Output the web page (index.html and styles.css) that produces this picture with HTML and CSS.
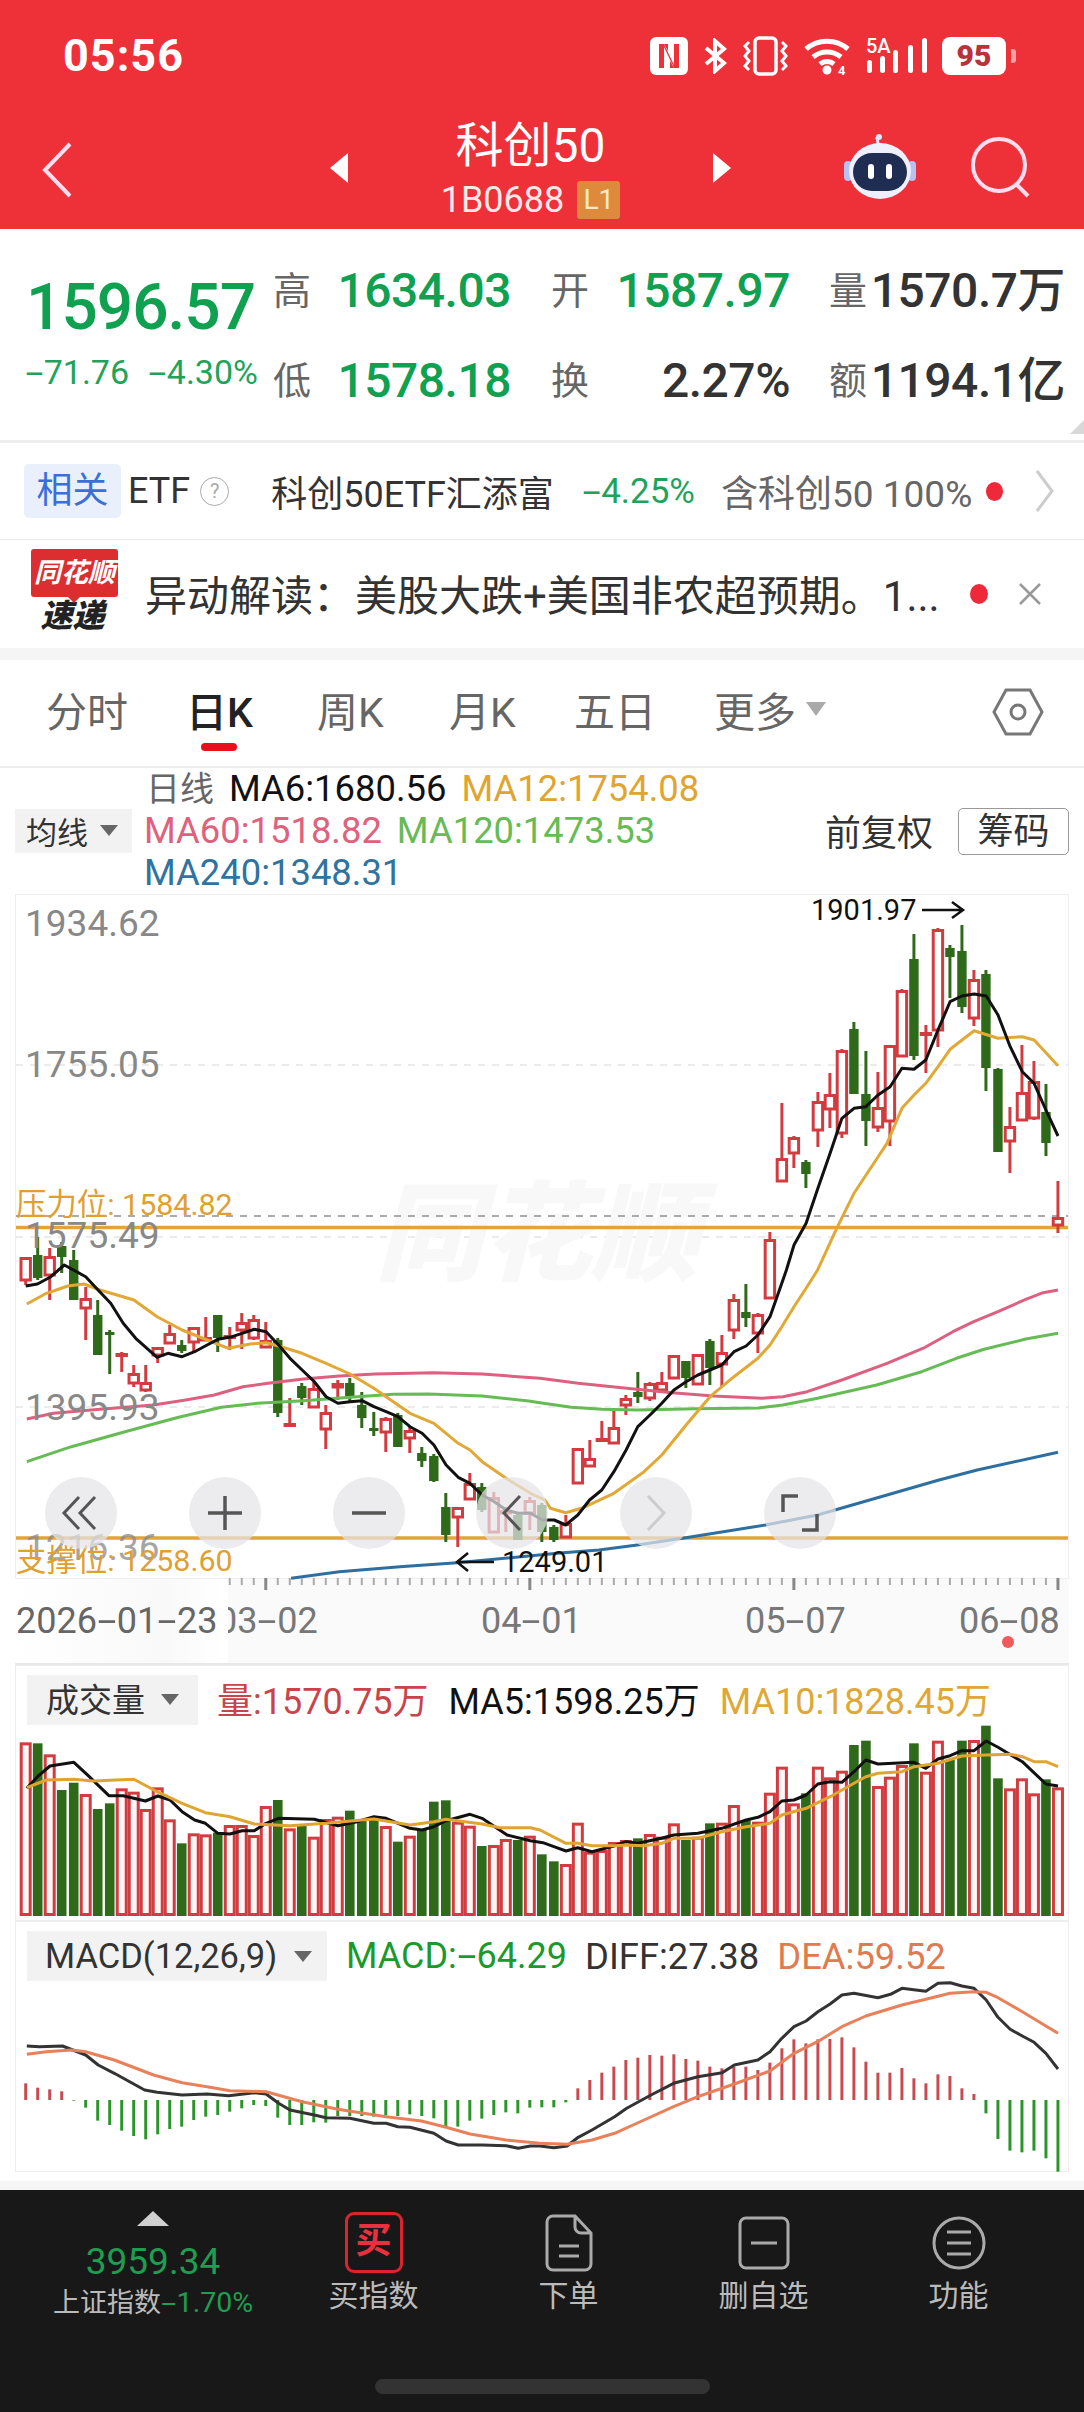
FILE: index.html
```html
<!DOCTYPE html>
<html lang="zh-CN">
<head>
<meta charset="utf-8">
<title>科创50</title>
<link rel="stylesheet" href="styles.css">
</head>
<body>
<div class="app">
  <header class="top">
    <div class="status">
      <span class="time">05:56</span>
      <div class="status-icons">
        <svg class="ic-nfc" width="38" height="38" viewBox="0 0 38 38"><rect width="38" height="38" rx="6" fill="#fff"/><path d="M9 31V7h5l10 21V7h5v24h-5L14 10v21z" fill="#ee3039"/><path d="M14 7h4v7zM24 31h-4v-7z" fill="#ee3039"/></svg>
        <svg class="ic-bt" width="24" height="36" viewBox="0 0 24 36"><path d="M3 10l18 15-9 8V3l9 8L3 26" fill="none" stroke="#fff" stroke-width="4"/></svg>
        <svg class="ic-vib" width="45" height="40" viewBox="0 0 45 40"><rect x="12" y="2" width="21" height="36" rx="4" fill="none" stroke="#fff" stroke-width="3.5"/><path d="M6 6l-4 4 4 5-4 5 4 5-4 5 4 4M39 6l4 4-4 5 4 5-4 5 4 5-4 4" fill="none" stroke="#fff" stroke-width="3"/></svg>
        <svg class="ic-wifi" width="51" height="40" viewBox="0 0 51 40"><g fill="none" stroke="#fff" stroke-width="5"><path d="M3 13a32 32 0 0 1 42 0"/><path d="M10 21a22 22 0 0 1 28 0"/><path d="M17 28a11 11 0 0 1 14 0"/></g><circle cx="24" cy="34" r="4.5" fill="#fff"/><text x="35" y="39" class="ic-wifi-4">4</text></svg>
        <svg class="ic-signal" width="62" height="40" viewBox="0 0 62 40"><text x="0" y="17" class="ic-5a">5A</text><g fill="#fff"><rect x="1" y="24" width="5" height="13" rx="2.5"/><rect x="14" y="20" width="5" height="17" rx="2.5"/><rect x="27" y="14" width="5" height="23" rx="2.5"/><rect x="42" y="9" width="5" height="28" rx="2.5"/><rect x="56" y="2" width="5" height="35" rx="2.5"/></g></svg>
        <span class="battery">95</span>
        <span class="battery-nub"></span>
      </div>
    </div>
    <div class="titlebar">
      <svg class="ic-back" width="30" height="56" viewBox="0 0 30 56"><path d="M28 2L3 28l25 26" fill="none" stroke="#fde" stroke-width="4"/></svg>
      <span class="tri tri-left"></span>
      <div class="title">
        <div class="title-name">科创50</div>
        <div class="title-code">1B0688<span class="level">L1</span></div>
      </div>
      <span class="tri tri-right"></span>
      <svg class="ic-robot" width="74" height="66" viewBox="0 0 74 66">
        <path d="M35 12c0-4 0-6-2-8" fill="none" stroke="#dfe3fb" stroke-width="3"/>
        <circle cx="36" cy="4" r="3" fill="#dfe3fb"/>
        <rect x="1" y="28" width="8" height="20" rx="4" fill="#b9c1f2"/>
        <rect x="65" y="28" width="8" height="20" rx="4" fill="#b9c1f2"/>
        <ellipse cx="37" cy="38" rx="31" ry="28" fill="#eef0ff"/>
        <rect x="10" y="20" width="54" height="38" rx="19" fill="#1f2d52"/>
        <rect x="25" y="31" width="6" height="15" rx="3" fill="#fff"/>
        <rect x="43" y="31" width="6" height="15" rx="3" fill="#fff"/>
      </svg>
      <svg class="ic-search" width="62" height="62" viewBox="0 0 62 62"><circle cx="29" cy="29" r="26" fill="none" stroke="#fde" stroke-width="4"/><path d="M46 48l12 12" stroke="#fde" stroke-width="4"/></svg>
    </div>
  </header>

  <section class="quote">
    <div class="q-main">
      <div class="q-price">1596.57</div>
      <div class="q-change"><span><span class="dash">-</span>71.76</span><span><span class="dash">-</span>4.30%</span></div>
    </div>
    <div class="q-stats">
      <span class="q-lbl">高</span><span class="q-val down">1634.03</span>
      <span class="q-lbl">开</span><span class="q-val down">1587.97</span>
      <span class="q-lbl">量</span><span class="q-val">1570.7万</span>
      <span class="q-lbl">低</span><span class="q-val down">1578.18</span>
      <span class="q-lbl">换</span><span class="q-val">2.27%</span>
      <span class="q-lbl">额</span><span class="q-val">1194.1亿</span>
    </div>
    <span class="corner"></span>
  </section>
  <div class="rule-thick"></div>

  <section class="etf">
    <span class="etf-tag">相关</span>
    <span class="etf-word">ETF</span>
    <span class="etf-help">?</span>
    <span class="etf-name">科创50ETF汇添富</span>
    <span class="etf-pct"><span class="dash">-</span>4.25%</span>
    <span class="etf-has">含科创50 100%</span>
    <span class="dot etf-dot"></span>
    <svg class="etf-more" width="20" height="44" viewBox="0 0 20 44"><path d="M2 2l15 20L2 42" fill="none" stroke="#ccc" stroke-width="3"/></svg>
  </section>

  <section class="news">
    <div class="news-logo">
      <span class="news-logo-top">同花顺</span>
      <span class="news-logo-bottom">速递</span>
    </div>
    <div class="news-text">异动解读：美股大跌+美国非农超预期。1...</div>
    <span class="dot news-dot"></span>
    <svg class="news-close" width="24" height="24" viewBox="0 0 24 24"><path d="M2 2l20 20M22 2L2 22" stroke="#999" stroke-width="2.5"/></svg>
  </section>
  <div class="band-a"></div>

  <nav class="tabs">
    <span class="tab">分时</span>
    <span class="tab tab-active">日K</span>
    <span class="tab">周K</span>
    <span class="tab">月K</span>
    <span class="tab">五日</span>
    <span class="tab tab-more">更多<i class="caret"></i></span>
    <svg class="ic-hex" width="52" height="48" viewBox="0 0 52 48"><path d="M2 24L14 2h24l12 22-12 22H14z" fill="none" stroke="#777" stroke-width="3"/><circle cx="26" cy="24" r="7" fill="none" stroke="#777" stroke-width="3"/></svg>
  </nav>

  <section class="legend">
    <div class="pill pill-ma">均线<i class="caret-dark"></i></div>
    <div class="legend-lines">
      <div class="legend-line"><span class="lg-day">日线</span><span class="c-ma6">MA6:1680.56</span><span class="c-ma12">MA12:1754.08</span></div>
      <div class="legend-line"><span class="c-ma60">MA60:1518.82</span><span class="c-ma120">MA120:1473.53</span></div>
      <div class="legend-line"><span class="c-ma240">MA240:1348.31</span></div>
    </div>
    <div class="legend-right">
      <span class="adj">前复权</span>
      <span class="chips">筹码</span>
    </div>
  </section>

  <section class="price">
    <svg id="price-svg" class="price-svg" width="1084" height="685" viewBox="0 894 1084 685">
      <rect x="15.5" y="894.5" width="1053" height="684" fill="none" stroke="#eee"/>
      <g class="grid"><path d="M16 1065H1068M16 1237H1068M16 1407H1068"/></g>
      <text x="375" y="1272" class="watermark">同花顺</text>
      <path class="level-dash" d="M16 1216H1068"/>
      <path class="level-line" d="M16 1227.5H1068M16 1538H1068"/>
      <g id="price-layer"></g>
      <path class="arrow" d="M922 910h40m-10-8l11 8-11 8"/>
      <path class="arrow" d="M494 1562h-36m10-9l-11 9 11 9"/>
    </svg>
    <span class="axis ax-1">1934.62</span>
    <span class="axis ax-2">1755.05</span>
    <span class="axis ax-3">1575.49</span>
    <span class="axis ax-4">1395.93</span>
    <span class="axis ax-5">1216.36</span>
    <span class="lvl lvl-up">压力位: 1584.82</span>
    <span class="lvl lvl-down">支撑位: 1258.60</span>
    <span class="ext ext-hi">1901.97</span>
    <span class="ext ext-lo">1249.01</span>
    <div class="zoomers">
      <span class="zoomer"><svg width="40" height="40" viewBox="0 0 40 40"><path d="M18 4L3 20l15 16M34 4L19 20l15 16" fill="none" stroke="#555" stroke-width="3"/></svg></span>
      <span class="zoomer"><svg width="36" height="36" viewBox="0 0 36 36"><path d="M1 18h34M18 1v34" stroke="#555" stroke-width="3.5"/></svg></span>
      <span class="zoomer"><svg width="36" height="36" viewBox="0 0 36 36"><path d="M1 18h34" stroke="#555" stroke-width="3.5"/></svg></span>
      <span class="zoomer"><svg width="22" height="40" viewBox="0 0 22 40"><path d="M19 3L3 20l16 17" fill="none" stroke="#555" stroke-width="3"/></svg></span>
      <span class="zoomer"><svg width="22" height="40" viewBox="0 0 22 40"><path d="M3 3l16 17L3 37" fill="none" stroke="#ccc" stroke-width="3"/></svg></span>
      <span class="zoomer"><svg width="38" height="38" viewBox="0 0 38 38"><path d="M2 18V2h15M36 20v16H21" fill="none" stroke="#555" stroke-width="3.5"/></svg></span>
    </div>
    <div class="dates">
      <span class="date d-2">03<span class="dash">-</span>02</span>
      <span class="date d-1">2026<span class="dash">-</span>01<span class="dash">-</span>23</span>
      <span class="date d-3">04<span class="dash">-</span>01</span>
      <span class="date d-4">05<span class="dash">-</span>07</span>
      <span class="date d-5">06<span class="dash">-</span>08</span>
      <span class="dot date-dot"></span>
    </div>
  </section>

  <section class="pane pane-vol">
    <div class="pane-head">
      <div class="pill pill-vol">成交量<i class="caret-dark"></i></div>
      <span class="v-vol">量:1570.75万</span>
      <span class="v-ma5">MA5:1598.25万</span>
      <span class="v-ma10">MA10:1828.45万</span>
    </div>
    <svg id="vol-svg" class="pane-svg" width="1054" height="196" viewBox="15 1725 1054 196"></svg>
  </section>

  <section class="pane pane-macd">
    <div class="pane-head">
      <div class="pill pill-macd">MACD(12,26,9)<i class="caret-dark"></i></div>
      <span class="m-macd">MACD:<span class="dash">-</span>64.29</span>
      <span class="m-diff">DIFF:27.38</span>
      <span class="m-dea">DEA:59.52</span>
    </div>
    <svg id="macd-svg" class="pane-svg" width="1054" height="191" viewBox="15 1981 1054 191"></svg>
  </section>
  <div class="spacer-white"></div>
  <div class="band-b"></div>

  <footer class="nav">
    <div class="nav-index">
      <span class="nav-up"></span>
      <span class="nav-num">3959.34</span>
      <span class="nav-sub">上证指数<b><span class="dash">-</span>1.70%</b></span>
    </div>
    <div class="nav-item">
      <span class="nav-ico"><span class="buy">买</span></span>
      <span class="nav-label">买指数</span>
    </div>
    <div class="nav-item">
      <span class="nav-ico"><svg width="48" height="58" viewBox="0 0 48 58"><path d="M8 2h22l16 17v31a6 6 0 0 1-6 6H8a6 6 0 0 1-6-6V8a6 6 0 0 1 6-6zM30 2v11a6 6 0 0 0 6 6h10" fill="none" stroke="#aaa" stroke-width="3"/><path d="M14 32h20M14 42h20" stroke="#aaa" stroke-width="3"/></svg></span>
      <span class="nav-label">下单</span>
    </div>
    <div class="nav-item">
      <span class="nav-ico"><svg width="52" height="54" viewBox="0 0 52 54"><rect x="2" y="2" width="48" height="50" rx="6" fill="none" stroke="#aaa" stroke-width="3"/><path d="M13 27h26" stroke="#aaa" stroke-width="3"/></svg></span>
      <span class="nav-label">删自选</span>
    </div>
    <div class="nav-item">
      <span class="nav-ico"><svg width="54" height="54" viewBox="0 0 54 54"><circle cx="27" cy="27" r="25" fill="none" stroke="#aaa" stroke-width="3"/><path d="M15 16h24M15 27h24M15 38h24" stroke="#aaa" stroke-width="3"/></svg></span>
      <span class="nav-label">功能</span>
    </div>
    <span class="home-bar"></span>
  </footer>
</div>
<script src="chart.js"></script>
</body>
</html>
```
FILE: styles.css
```css
* { box-sizing: border-box; }
html, body { margin: 0; padding: 0; background: #fff; }
body { font-family: Roboto, "Noto Sans CJK SC", sans-serif; color: #333; }
.app { width: 1084px; height: 2412px; overflow: hidden; display: flex; flex-direction: column; }
i { font-style: normal; }
.dash { display: inline-block; width: .55em; text-align: center; transform: scaleX(1.9); }

/* header */
.top { height: 229px; background: #ee3039; color: #fff; padding-top: 36px; flex: none; }
.status { display: flex; align-items: center; height: 40px; padding-left: 63px; padding-right: 68px; }
.time { font-size: 45px; font-weight: 700; letter-spacing: 1px; line-height: 40px; }
.status-icons { margin-left: auto; display: flex; align-items: center; }
.ic-bt { margin-left: 15px; }
.ic-vib { margin-left: 16px; }
.ic-wifi { margin-left: 15px; }
.ic-signal { margin-left: 12px; }
.ic-wifi-4 { font-size: 13px; font-weight: 700; fill: #fff; }
.ic-5a { font-size: 20px; font-weight: 500; fill: #fff; }
.battery { margin-left: 14px; width: 64px; height: 38px; border-radius: 8px; background: #fff; color: #b8323b; font-size: 30px; font-weight: 900; line-height: 38px; text-align: center; }
.battery-nub { margin-left: 5px; width: 5px; height: 14px; border-radius: 0 3px 3px 0; background: rgba(255,255,255,.55); }
.titlebar { display: flex; align-items: center; height: 106px; margin-top: 37px; padding-left: 42px; }
.ic-back { flex: none; margin-top: 8px; }
.tri { flex: none; width: 0; height: 0; border-top: 15px solid transparent; border-bottom: 15px solid transparent; margin-top: 3px; }
.tri-left { margin-left: 258px; border-right: 18px solid #fff; }
.tri-right { border-left: 18px solid #fff; }
.title { width: 365px; text-align: center; flex: none; margin-top: 6px; }
.title-name { font-size: 48px; line-height: 56px; white-space: nowrap; }
.title-code { font-size: 36px; line-height: 40px; margin-top: 6px; color: #fde8e8; display: flex; justify-content: center; align-items: center; }
.level { margin-left: 13px; width: 43px; height: 38px; background: #dd8a3d; color: #fde8c8; border-radius: 3px; font-size: 28px; line-height: 38px; }
.ic-robot { flex: none; margin-left: 112px; }
.ic-search { flex: none; margin-left: 53px; margin-top: 2px; }

/* quote */
.quote { height: 211px; flex: none; display: flex; position: relative; }
.q-main { width: 273px; padding: 48px 0 0 25px; flex: none; }
.q-price { font-size: 64px; font-weight: 500; line-height: 62px; color: #0fa050; letter-spacing: -1px; margin-left: 1px; }
.q-change { display: flex; gap: 19px; margin-top: 15px; font-size: 34px; line-height: 36px; color: #1ea45a; white-space: nowrap; }
.q-stats { display: grid; grid-template-columns: 40px 198px 80px 199px 79px 196px; grid-auto-rows: 90px; align-items: center; padding-top: 17px; }
.q-lbl { font-size: 38px; color: #666; justify-self: end; width: 40px; margin-bottom: 8px; }
.q-val { font-size: 48px; font-weight: 500; line-height: 56px; text-align: right; color: #333; letter-spacing: -.5px; white-space: nowrap; }
.q-val.down { color: #0fa050; }
.corner { position: absolute; right: 0; bottom: 6px; width: 0; height: 0; border-left: 14px solid transparent; border-bottom: 14px solid #d8d8d8; }
.rule-thick { height: 3px; background: #eee; flex: none; }

/* etf */
.etf { height: 97px; flex: none; display: flex; align-items: center; padding-left: 24px; border-bottom: 1px solid #e8e8e8; font-size: 36px; white-space: nowrap; }
.etf-tag { width: 97px; height: 54px; line-height: 54px; text-align: center; background: #e9f0fb; color: #3a6fd8; border-radius: 5px; }
.etf-word { margin-left: 7px; }
.etf-help { margin-left: 10px; width: 29px; height: 29px; border-radius: 50%; border: 1.5px solid #aaa; color: #aaa; font-size: 20px; line-height: 26px; text-align: center; }
.etf-name { margin-left: 42px; }
.etf-pct { margin-left: 28px; color: #1ea45a; font-size: 35px; }
.etf-has { margin-left: 26px; color: #666; font-size: 37px; }
.dot { display: block; border-radius: 50%; background: #ee2a3a; flex: none; }
.etf-dot { margin-left: 14px; width: 17px; height: 19px; }
.etf-more { margin-left: 32px; }

/* news */
.news { height: 108px; flex: none; display: flex; align-items: center; padding-left: 31px; white-space: nowrap; }
.news-logo { width: 87px; flex: none; display: flex; flex-direction: column; align-items: center; margin-top: -6px; }
.news-logo-top { position: relative; width: 87px; height: 48px; background: #dc2e30; color: #fff; border-radius: 3px; font-size: 27px; font-weight: 700; font-style: italic; line-height: 48px; text-align: center; }
.news-logo-top::after { content: ""; position: absolute; left: 36px; bottom: -6px; border-left: 7px solid transparent; border-right: 7px solid transparent; border-top: 7px solid #dc2e30; }
.news-logo-bottom { font-size: 32px; line-height: 36px; font-weight: 900; font-style: italic; color: #222; margin-top: 1px; margin-left: -4px; }
.news-text { margin-left: 27px; width: 802px; font-size: 42px; color: #333; margin-top: -4px; }
.news-dot { margin-left: 23px; width: 18px; height: 20px; }
.news-close { margin-left: 30px; }
.band-a { height: 12px; background: #f5f5f5; flex: none; }

/* tabs */
.tabs { height: 108px; flex: none; display: flex; align-items: center; padding: 0 40px 8px 46px; border-bottom: 2px solid #eee; font-size: 41px; color: #666; white-space: nowrap; }
.tab { position: relative; width: 132px; }
.tab:nth-child(1) { width: 140px; }
.tab:nth-child(2) { width: 131px; }
.tab:nth-child(4) { width: 125px; }
.tab:nth-child(5) { width: 140px; }
.tab-active { color: #222; font-weight: 500; }
.tab-active::after { content: ""; position: absolute; left: 15px; top: 64px; width: 36px; height: 8px; border-radius: 4px; background: #e8101a; }
.tab-more { width: auto; display: flex; align-items: center; }
.caret { margin-left: 10px; border-left: 10px solid transparent; border-right: 10px solid transparent; border-top: 14px solid #aaa; }
.ic-hex { margin-left: auto; margin-top: 6px; }

/* legend */
.legend { height: 126px; flex: none; display: flex; align-items: center; padding: 0 15px; font-size: 36.4px; white-space: nowrap; }
.pill { background: #f2f2f2; display: flex; align-items: center; color: #333; }
.pill-ma { width: 117px; height: 44px; padding: 0 0 2px 11px; font-size: 31px; }
.caret-dark { border-left: 9px solid transparent; border-right: 9px solid transparent; border-top: 11px solid #666; }
.pill-ma .caret-dark { margin-left: 12px; }
.legend-lines { margin-left: 12px; }
.legend-line { display: flex; gap: 15px; height: 42px; line-height: 42px; }
.lg-day { font-size: 34px; color: #666; margin-left: 2px; }
.c-ma6 { color: #111; }
.c-ma12 { color: #e0a530; }
.c-ma60 { color: #e0617d; }
.c-ma120 { color: #66bb55; }
.c-ma240 { color: #2f73a0; }
.legend-right { margin-left: auto; display: flex; align-items: center; gap: 25px; font-size: 36px; color: #333; }
.adj { margin-bottom: 3px; }
.chips { width: 111px; height: 47px; line-height: 47px; text-align: center; border: 1.5px solid #999; border-radius: 5px; }

/* price chart */
.price { position: relative; height: 771px; flex: none; }
.price-svg { display: block; position: relative; z-index: 1; overflow: visible; }
.grid path { stroke: #e5e5e5; stroke-width: 1.5; stroke-dasharray: 7 7; fill: none; }
.watermark { font-size: 108px; font-weight: 900; font-style: italic; fill: #f8f8f8; }
.level-dash { stroke: #aaa; stroke-width: 2; stroke-dasharray: 7 7; fill: none; }
.level-line { stroke: #e2a437; stroke-width: 3.5; fill: none; }
.arrow { stroke: #111; stroke-width: 2.5; fill: none; }
.axis, .lvl, .ext { position: absolute; z-index: 2; white-space: nowrap; }
.axis { left: 25px; font-size: 37px; line-height: 36px; color: #888; }
.ax-1 { top: 12px; }
.ax-2 { top: 153px; }
.ax-3 { top: 324px; }
.ax-4 { top: 496px; }
.ax-5 { top: 636px; color: rgba(136,136,136,.75); }
.lvl { left: 16px; font-size: 30.4px; line-height: 34px; color: #e0a030; }
.lvl-up { top: 294px; }
.lvl-down { top: 650px; }
.ext { font-size: 29px; line-height: 30px; color: #111; }
.ext-hi { left: 811px; top: 1px; }
.ext-lo { left: 502px; top: 653px; }
.zoomers { position: absolute; z-index: 3; left: 45px; top: 583px; display: flex; gap: 71.8px; }
.zoomer { width: 72px; height: 72px; border-radius: 50%; background: rgba(228,228,232,.72); display: flex; align-items: center; justify-content: center; }
.dates { position: relative; height: 86px; margin: 0 15px; background: #fafafa; border-bottom: 2px solid #e8e8e8; }
.date { position: absolute; top: 24px; font-size: 36px; line-height: 36px; color: #777; white-space: nowrap; }
.d-1 { left: 0; width: 213px; padding-left: 1px; height: 84px; top: 0; padding-top: 24px; color: #666; background: linear-gradient(to right, #fff, #f9f9f9 70%, #fff); }
.d-2 { left: 202px; }
.d-3 { left: 466px; }
.d-4 { left: 730px; }
.d-5 { left: 944px; }
.date-dot { position: absolute; left: 987px; top: 57px; width: 12px; height: 12px; background: #f05a5a; }

/* panes */
.pane { margin: 0 15px; width: 1054px; flex: none; box-shadow: inset 0 0 0 1px #eee; }
.pane-vol { height: 256px; }
.pane-macd { height: 251px; }
.pane-head { height: 60px; padding: 10px 0 0 12px; display: flex; align-items: center; gap: 20px; font-size: 36px; white-space: nowrap; }
.pane-macd .pane-head { font-size: 36.4px; gap: 18px; }
.pane-macd .pane-head .m-macd { margin-left: 1px; font-size: 36px; }
.pane-head .pill { height: 50px; font-size: 33px; }
.pill-vol { width: 171px; padding: 0 0 5px 19px; }
.v-vol, .v-ma5, .v-ma10 { margin-bottom: 5px; }
.v-vol { margin-left: -1px; }
.pill-vol .caret-dark { margin: 4px 0 0 16px; }
.pane-head .pill-macd { width: 300px; padding-left: 18px; font-size: 34.5px; }
.pill-macd .caret-dark { margin-left: 17px; }
.pane-svg { display: block; }
.v-vol { color: #c9444a; }
.v-ma5 { color: #111; }
.v-ma10 { color: #dfa735; }
.m-macd { color: #1a9a2a; }
.m-diff { color: #333; }
.m-dea { color: #e07a50; }
.spacer-white { height: 9px; flex: none; }
.band-b { height: 9px; background: #f5f5f5; flex: none; }

/* bottom nav */
.nav { position: relative; height: 222px; flex: none; background: #181818; display: grid; grid-template-columns: 276px 195px 195px 195px 195px; color: #bbb; white-space: nowrap; }
.nav-index { padding: 21px 0 0 30px; display: flex; flex-direction: column; align-items: center; }
.nav-up { width: 0; height: 0; border-left: 16px solid transparent; border-right: 16px solid transparent; border-bottom: 15px solid #d0d0d0; }
.nav-num { margin-top: 18px; font-size: 37px; line-height: 36px; color: #1e9e50; }
.nav-sub { margin-top: 6px; font-size: 27px; line-height: 34px; }
.nav-sub b { font-weight: 400; color: #1e9e50; font-size: 28.5px; }
.nav-item { padding-top: 22px; display: flex; flex-direction: column; align-items: center; }
.nav-ico { height: 61px; display: flex; align-items: center; justify-content: center; }
.nav-label { margin-top: 5px; font-size: 30px; line-height: 36px; }
.buy { width: 58px; height: 61px; border: 3.5px solid #d9252f; border-radius: 9px; color: #e8303f; font-size: 36px; font-weight: 700; line-height: 52px; text-align: center; }
.home-bar { position: absolute; left: 375px; top: 189px; width: 335px; height: 15px; border-radius: 8px; background: #333; }
```
FILE: chart.js
```javascript
// Candle rows: [high, bodyTop, bodyBottom, low, colour]
var candles = [
[1257,1257,1280,1285,'r'],[1237,1255,1278,1280,'g'],[1248,1256,1275,1300,'r'],[1242,1246,1257,1273,'g'],[1250,1260,1300,1300,'g'],
[1287,1298,1308,1340,'r'],[1300,1315,1355,1355,'g'],[1330,1332,1335,1374,'g'],[1352,1353,1355,1372,'r'],[1365,1373,1383,1387,'r'],
[1365,1382,1390,1392,'r'],[1347,1347,1355,1363,'r'],[1325,1333,1343,1343,'r'],[1340,1345,1351,1353,'g'],[1327,1327,1342,1353,'r'],
[1317,1337,1340,1340,'r'],[1315,1315,1338,1352,'g'],[1327,1335,1337,1350,'r'],[1313,1322,1330,1349,'r'],[1315,1319,1338,1340,'r'],
[1322,1340,1347,1347,'r'],[1338,1340,1413,1417,'g'],[1398,1423,1424,1425,'r'],[1383,1386,1398,1405,'g'],[1382,1388,1407,1407,'r'],
[1405,1412,1429,1449,'r'],[1380,1383,1387,1400,'r'],[1378,1383,1397,1402,'g'],[1392,1405,1418,1428,'g'],[1412,1428,1430,1436,'g'],
[1417,1418,1432,1452,'r'],[1413,1415,1447,1447,'g'],[1427,1430,1438,1453,'r'],[1447,1453,1461,1467,'g'],[1454,1456,1481,1482,'g'],
[1493,1507,1535,1542,'g'],[1507,1507,1517,1547,'r'],[1473,1483,1499,1500,'r'],[1483,1487,1510,1512,'g'],[1492,1497,1532,1532,'r'],
[1507,1510,1513,1532,'r'],[1512,1515,1540,1540,'g'],[1497,1500,1513,1530,'r'],[1503,1505,1532,1542,'g'],[1525,1527,1540,1542,'g'],
[1515,1523,1537,1537,'r'],[1448,1448,1483,1483,'r'],[1440,1458,1466,1467,'r'],[1421,1438,1439,1440,'r'],[1408,1427,1443,1443,'r'],
[1395,1398,1405,1415,'r'],[1372,1392,1397,1403,'g'],[1382,1383,1398,1401,'r'],[1372,1382,1390,1392,'r'],[1355,1355,1378,1378,'r'],
[1361,1361,1378,1388,'g'],[1354,1354,1384,1384,'r'],[1339,1341,1368,1385,'g'],[1335,1352,1364,1387,'r'],[1294,1299,1330,1339,'r'],
[1284,1312,1318,1327,'g'],[1313,1314,1333,1353,'r'],[1232,1239,1298,1298,'r'],[1103,1158,1181,1182,'r'],[1136,1137,1153,1168,'r'],
[1160,1162,1174,1188,'g'],[1092,1101,1130,1147,'r'],[1073,1094,1109,1128,'r'],[1049,1050,1133,1138,'r'],[1022,1029,1094,1094,'g'],
[1051,1094,1121,1146,'g'],[1072,1107,1127,1132,'r'],[1045,1045,1121,1146,'r'],[989,990,1056,1057,'r'],[934,959,1056,1060,'g'],
[1025,1032,1033,1073,'r'],[928,929,1030,1047,'r'],[945,948,957,998,'g'],[925,951,1007,1013,'g'],[970,979,1018,1026,'r'],
[970,974,1068,1091,'g'],[1068,1069,1152,1152,'g'],[1107,1126,1141,1173,'r'],[1045,1092,1120,1120,'r'],[1061,1081,1118,1120,'r'],
[1084,1112,1143,1156,'g'],[1181,1217,1225,1233,'r']
];

// Volume bar tops (1660 + value/3) and colours
var volTop = [247,250,283,390,368,402,447,430,385,395,447,382,478,550,520,523,518,495,495,525,438,420,505,495,530,477,470,452,480,478,498,545,527,510,425,421,485,497,558,555,537,540,527,583,604,612,488,575,570,546,540,535,522,530,490,540,530,490,488,435,480,485,398,320,430,400,320,352,332,255,242,378,350,315,250,335,242,300,242,240,197,355,385,355,400,358,382];
var volGreen = [1,3,4,6,7,13,16,21,23,27,28,29,31,33,34,35,38,41,43,44,51,55,57,60,65,69,70,74,77,78,80,81,85];

// MACD bar ends (1930 + value/3); zero line at 510
var macdEnd = [460,473,478,484,512,533,572,585,602,618,628,613,597,590,570,560,555,545,535,525,528,563,585,585,577,578,558,558,558,560,556,558,553,558,565,590,590,572,566,555,547,550,533,532,532,517,475,450,428,410,390,383,375,377,373,387,392,410,415,410,410,420,398,355,328,340,328,327,322,352,395,428,428,414,445,460,433,438,475,492,550,627,662,667,662,685,725];

function xAt(i) { return 25.7 + 12.003 * i; }

// Read points that were measured on differently scaled crops
function pts(sx, ox, oy, flat) {
  var out = [];
  for (var k = 0; k < flat.length; k += 2) out.push((ox + flat[k] / sx).toFixed(1) + ',' + (oy + flat[k + 1] / 3).toFixed(1));
  return out;
}
function line(points, colour, width) {
  return '<polyline fill="none" stroke="' + colour + '" stroke-width="' + width + '" stroke-linejoin="round" points="' + points.join(' ') + '"/>';
}

var RED = '#d23b40', GREEN = '#2f6a1a';
var html = '';
candles.forEach(function (c, i) {
  var x = xAt(i), col = c[4] === 'r' ? RED : GREEN;
  html += '<line x1="' + x + '" x2="' + x + '" y1="' + c[0] + '" y2="' + c[3] + '" stroke="' + col + '" stroke-width="3"/>';
  if (c[4] === 'r') {
    html += '<rect x="' + (x - 4.7) + '" y="' + (c[1] + 1.5) + '" width="9.4" height="' + Math.max(c[2] - c[1] - 1.5, 1) + '" fill="#fff" stroke="' + col + '" stroke-width="3"/>';
  } else {
    html += '<rect x="' + (x - 4.7) + '" y="' + c[1] + '" width="9.4" height="' + Math.max(c[2] - c[1], 3) + '" fill="' + col + '"/>';
  }
});

var ma240 = pts(2.8, 0, 1270, [815,925,950,905,1120,890,1280,878,1568,849]).concat(
  pts(2.882, 540, 1270, [170,840,280,825,420,803,650,765,800,735,1000,675,1150,630,1260,600,1493,547]));
var ma120 = pts(2.8, 0, 1270, [75,575,200,530,350,485,500,442,620,412,720,400,850,392,1000,380,1100,373,1200,372,1350,378,1480,393]).concat(
  pts(2.882, 540, 1270, [0,398,90,412,180,418,280,420,450,416,630,414,700,405,800,385,970,345,1100,305,1200,265,1280,238,1400,207,1493,190]));
var ma60 = pts(2.8, 0, 1270, [75,447,150,430,280,418,430,405,520,390,600,375,680,350,750,340,850,327,950,318,1050,312,1215,308,1350,312,1450,320]).concat(
  pts(2.882, 540, 1270, [0,325,110,340,250,355,380,368,500,378,640,385,700,380,770,365,870,330,1000,280,1110,232,1190,185,1250,155,1320,125,1400,88,1450,68,1493,60]));
var ma12 = pts(2.8, 0, 1270, [75,102,130,70,190,48,235,42,280,60,375,90,440,140,510,180,580,210,640,235,700,222,745,218,780,228,846,250,913,280,980,312,1047,355,1081,380,1148,430,1215,460,1283,520,1316,540,1350,575,1417,625,1485,670]).concat(
  pts(2.882, 540, 1270, [14,690,30,715,74,728,120,715,213,670,300,605,351,555,421,465,490,380,559,320,628,265,663,225,697,170,732,110,767,55,800,0]),
  pts(2.882, 540, 890, [855,1015,905,910,965,815,1000,760,1043,655,1078,615,1112,580,1147,530,1182,478,1251,422,1320,445,1390,440,1424,450,1493,527]));
var ma6 = pts(2.8, 0, 1270, [72,48,105,42,140,22,180,-15,240,20,270,55,310,100,345,160,380,205,440,262,470,250,510,260,545,245,580,225,610,208,650,200,678,190,712,178,745,185,780,225,812,265,846,300,880,335,913,380,946,400,980,395,1014,392,1047,410,1081,425,1114,440,1148,470,1182,490,1215,525,1249,585,1283,622,1316,640,1350,675,1384,695,1417,720,1451,730,1485,730,1519,750]).concat(
  pts(2.882, 540, 1270, [41,750,74,765,109,735,143,690,178,660,213,605,248,540,282,470,317,435,351,400,386,360,421,335,455,315,490,300,524,285,559,245,594,228,628,195,663,140,697,40,710,0]),
  pts(2.882, 540, 890, [732,1065,767,1000,801,895,836,790,870,685,905,655,939,650,974,615,1009,590,1043,535,1078,538,1112,510,1147,420,1182,335,1216,318,1251,312,1286,318,1320,375,1355,470,1390,545,1424,580,1458,660,1493,738]));

html += line(ma240, '#2f6f9f', 3) + line(ma120, '#66bb55', 3) + line(ma60, '#dd6080', 3) + line(ma12, '#e2a835', 3) + line(ma6, '#111', 3);

// Time axis ticks
for (var t = 17; t < 87; t++) {
  var big = t === 20 || t === 42 || t === 64 || t === 86;
  html += '<line x1="' + xAt(t) + '" x2="' + xAt(t) + '" y1="1578" y2="' + (big ? 1590 : 1585) + '" stroke="' + (big ? '#888' : '#aaa') + '" stroke-width="' + (big ? 3 : 2) + '"/>';
}
document.getElementById('price-layer').innerHTML = html;

// Volume pane
var vol = '';
volTop.forEach(function (v, i) {
  var x = xAt(i), top = 1660 + v / 3, green = volGreen.indexOf(i) >= 0;
  if (green) vol += '<rect x="' + (x - 4.8) + '" y="' + top + '" width="9.6" height="' + (1916 - top) + '" fill="' + GREEN + '"/>';
  else vol += '<rect x="' + (x - 4.5) + '" y="' + (top + 1.5) + '" width="9" height="' + (1913 - top) + '" fill="#fff6f6" stroke="' + RED + '" stroke-width="3"/>';
});
var vma5 = pts(2.8, 0, 1660, [75,385,105,350,140,318,207,307,250,350,305,407,345,407,407,423,442,408,476,420,510,455,545,480,575,490,610,520,644,522,678,512,712,512,745,490,780,475,880,478,946,497,1000,485,1047,470,1081,475,1148,505,1182,510,1215,500,1249,482,1316,463,1350,475,1420,525,1485,542,1520,548]).concat(
  pts(2.882, 540, 1660, [40,560,75,573,109,563,150,575,213,558,248,545,282,550,350,535,386,525,455,520,524,505,594,480,628,472,663,455,697,423,732,420,767,405,801,372,836,365,870,367,905,335,939,300,974,312,1078,307,1112,325,1147,297,1182,287,1216,272,1251,272,1286,243,1320,262,1390,305,1458,372,1493,378]));
var vma10 = pts(2.8, 0, 1660, [75,383,130,360,207,358,260,363,375,358,440,395,510,430,575,458,644,470,712,492,812,497,913,490,1014,480,1047,477,1148,495,1215,485,1249,478,1350,492,1400,503,1485,503]).concat(
  pts(2.882, 540, 1660, [0,510,75,550,109,550,150,557,213,557,248,555,300,557,351,550,386,535,455,535,524,515,594,500,663,490,697,465,767,445,836,410,905,370,939,350,974,340,1043,335,1078,320,1147,310,1216,288,1286,285,1355,283,1390,290,1424,305,1458,305,1493,320]));
document.getElementById('vol-svg').innerHTML = vol + line(vma5, '#111', 3) + line(vma10, '#e0a530', 3);

// MACD pane
var macd = '';
macdEnd.forEach(function (v, i) {
  var x = xAt(i), end = 1930 + v / 3, zero = 2100;
  macd += '<line x1="' + x + '" x2="' + x + '" y1="' + zero + '" y2="' + end + '" stroke="' + (v < 510 ? '#c94a50' : '#2a962a') + '" stroke-width="3"/>';
});
var diff = pts(2.8, 0, 1930, [75,348,110,350,175,348,240,375,275,405,320,430,405,480,440,487,510,495,580,492,640,497,712,488,745,492,780,520,812,540,880,555,913,563,980,565,1047,580,1081,580,1114,590,1148,592,1215,610,1249,633,1283,645,1350,645,1417,647,1451,655,1485,648]).concat(
  pts(2.882, 540, 1930, [0,648,40,653,78,648,110,622,150,600,215,560,250,535,320,495,385,460,455,440,525,428,560,405,628,390,663,365,697,325,732,290,767,273,801,245,836,222,870,195,905,190,974,203,1010,193,1043,175,1112,184,1147,160,1182,158,1216,168,1251,175,1286,210,1320,262,1355,298,1390,318,1424,337,1458,370,1493,417]));
var dea = pts(2.8, 0, 1930, [75,373,130,365,200,360,240,365,320,390,430,435,510,458,580,470,644,482,745,485,846,515,946,538,1081,560,1180,573,1249,592,1316,612,1417,630]).concat(
  pts(2.882, 540, 1930, [0,640,78,643,150,630,215,610,300,570,385,530,455,500,560,462,663,423,732,370,800,335,870,290,939,258,1043,225,1112,208,1182,190,1251,185,1286,187,1320,203,1390,245,1458,288,1493,310]));
document.getElementById('macd-svg').innerHTML = macd + line(diff, '#333', 3) + line(dea, '#e8805a', 3);
```
